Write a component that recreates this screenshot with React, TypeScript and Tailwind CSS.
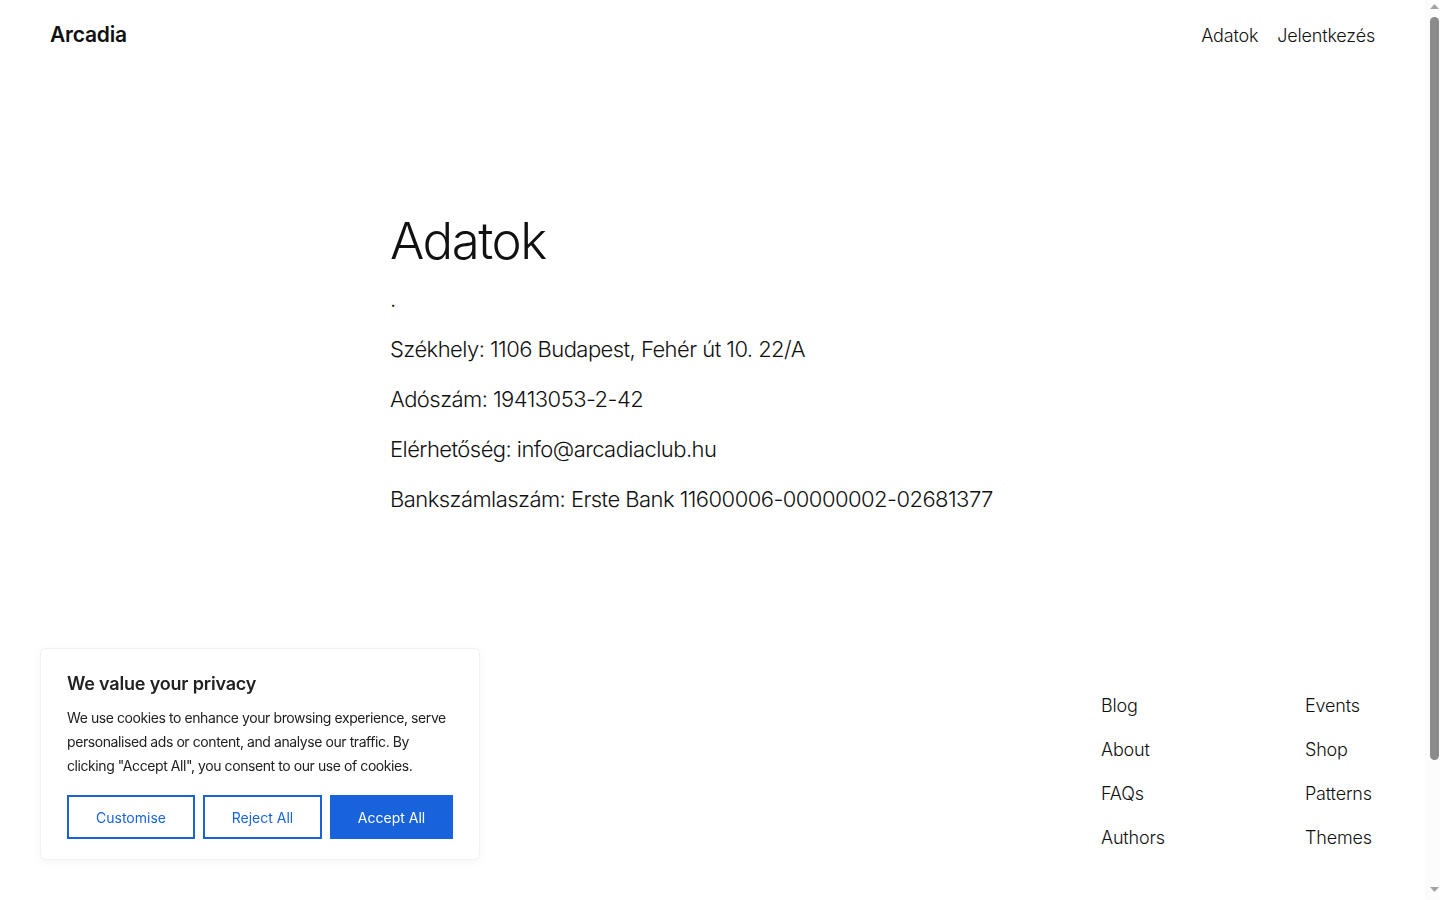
import React from "react";

const footerLinks = [
  ["Blog", "Events"],
  ["About", "Shop"],
  ["FAQs", "Patterns"],
  ["Authors", "Themes"],
];

const CookieBanner = () => {
  return (
    <div className="fixed bottom-[40px] left-[40px] w-[440px] rounded-[6px] border border-[#f1f1f1] bg-white px-[26px] pt-[22px] pb-[20px] shadow-[0_2px_10px_rgba(0,0,0,0.04)]">
      <h2 className="text-[18px] font-semibold leading-[26px] tracking-[-0.01em] text-[#212121]">
        We value your privacy
      </h2>
      <p className="mt-[9px] whitespace-nowrap text-[14px] leading-[24px] tracking-[-0.03em] text-[#212121]">
        We use cookies to enhance your browsing experience, serve
        <br />
        personalised ads or content, and analyse our traffic. By
        <br />
        clicking "Accept All", you consent to our use of cookies.
      </p>
      <div className="mt-[17px] flex gap-[8px]">
        <button className="h-[44px] w-[128px] border-2 border-[#1863dc] text-[14px] text-[#1863dc]">
          Customise
        </button>
        <button className="h-[44px] w-[119px] border-2 border-[#1863dc] text-[14px] text-[#1863dc]">
          Reject All
        </button>
        <button className="h-[44px] w-[123px] border-2 border-[#1863dc] bg-[#1863dc] text-[14px] text-white">
          Accept All
        </button>
      </div>
    </div>
  );
};

// browser scrollbar as it shows in the screenshot
const Scrollbar = () => (
  <div className="flex h-screen w-[15px] shrink-0 flex-col items-center bg-[#fcfcfc] pl-[3px]">
    <svg width="9" height="6" viewBox="0 0 9 6" className="mt-[4px]">
      <path d="M4.5 0 L9 5 L0 5 Z" fill="#a3a3a3" />
    </svg>
    <div className="mt-[7px] h-[743px] w-[9px] rounded-full bg-[#8b8b8b]" />
    <div className="flex-1" />
    <svg width="9" height="6" viewBox="0 0 9 6" className="mb-[7px]">
      <path d="M0 0 L9 0 L4.5 5 Z" fill="#a3a3a3" />
    </svg>
  </div>
);

export default function App() {
  return (
    <div className="flex h-screen overflow-hidden bg-white font-['Inter',sans-serif] text-[#111111]">
      <div className="h-screen w-[1425px] shrink-0 overflow-y-auto [scrollbar-width:none]">
        <div className="min-h-[1055px]">
          {/* header */}
          <header className="flex h-[70px] items-center justify-between px-[50px]">
            <a className="text-[21px] font-semibold tracking-[-0.01em]">Arcadia</a>
            <nav className="flex gap-[19px] text-[18px] font-light tracking-[-0.01em]">
              <a>Adatok</a>
              <a>Jelentkezés</a>
            </nav>
          </header>

          {/* content */}
          <main className="mx-auto w-[645px] pt-[140px]">
            <h1 className="text-[51px] font-light leading-[62px] tracking-[-0.03em]">
              Adatok
            </h1>
            <div className="mt-[12px] flex flex-col gap-[20px] text-[22px] font-light leading-[30px] tracking-[-0.025em]">
              <p>.</p>
              <p>Székhely: 1106 Budapest, Fehér út 10. 22/A</p>
              <p>Adószám: 19413053-2-42</p>
              <p>Elérhetőség: info@arcadiaclub.hu</p>
              <p>Bankszámlaszám: Erste Bank 11600006-00000002-02681377</p>
            </div>
          </main>

          {/* footer */}
          <footer className="mt-[178px] px-[50px] pb-[60px]">
            <div className="flex justify-end">
              {[0, 1].map((col) => (
                <div
                  key={col}
                  className={`flex flex-col gap-[17px] text-[18px] font-light leading-[27px] tracking-[-0.01em] ${
                    col === 0 ? "w-[204px]" : "w-[70px]"
                  }`}
                >
                  {footerLinks.map((row) => (
                    <a key={row[col]} className="whitespace-nowrap">
                      {row[col]}
                    </a>
                  ))}
                </div>
              ))}
            </div>
          </footer>
        </div>
      </div>

      <Scrollbar />
      <CookieBanner />
    </div>
  );
}
